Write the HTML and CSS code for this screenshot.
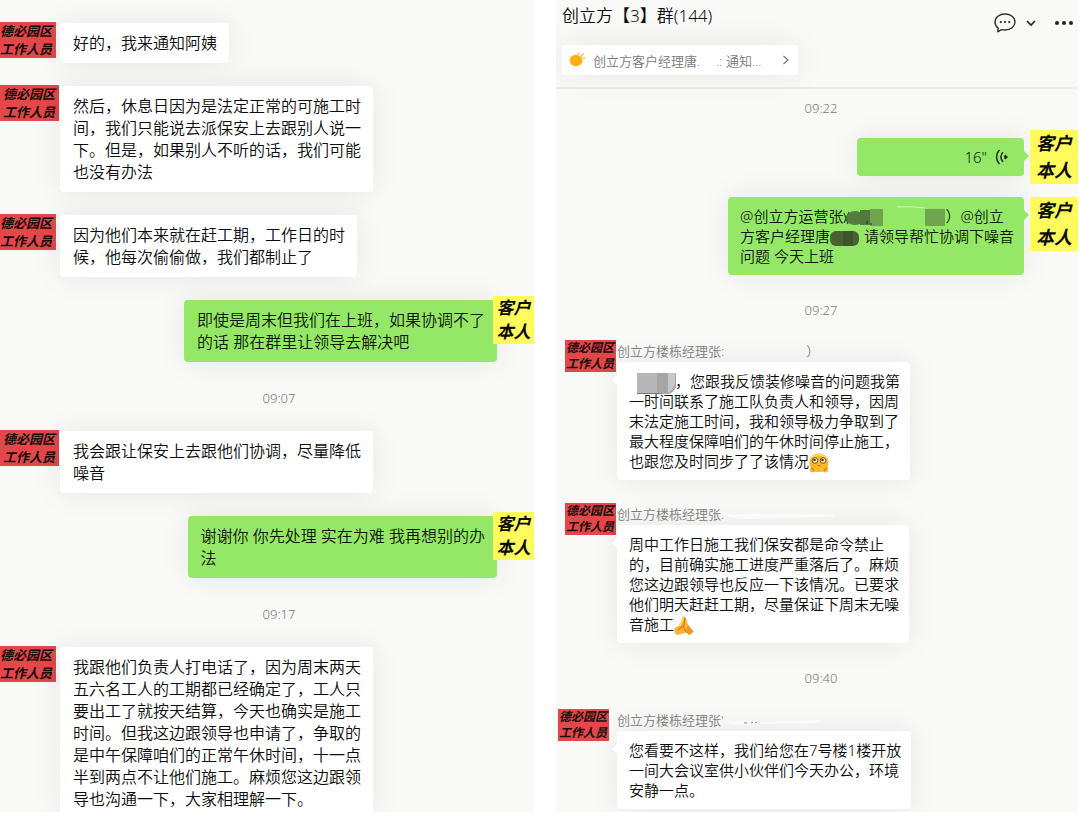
FILE: index.html
```html
<!DOCTYPE html>
<html lang="zh-CN">
<head>
<meta charset="utf-8">
<title>创立方【3】群</title>
<link rel="stylesheet" href="styles.css">
</head>
<body>
<main class="page">
  <section class="panel direct">
    <div class="row"><div class="who"><span class="staff narrow">德必园区<br>工作人员</span></div><p class="bubble">好的，我来通知阿姨</p></div>
    <div class="row"><div class="who"><span class="staff">德必园区<br>工作人员</span></div><p class="bubble">然后，休息日因为是法定正常的可施工时<br>间，我们只能说去派保安上去跟别人说一<br>下。但是，如果别人不听的话，我们可能<br>也没有办法</p></div>
    <div class="row"><div class="who"><span class="staff narrow">德必园区<br>工作人员</span></div><p class="bubble">因为他们本来就在赶工期，工作日的时<br>候，他每次偷偷做，我们都制止了</p></div>
    <div class="row mine"><p class="bubble">即使是周末但我们在上班，如果协调不了<br>的话 那在群里让领导去解决吧</p><span class="client">客户<br>本人</span></div>
    <time class="time">09:07</time>
    <div class="row"><div class="who"><span class="staff">德必园区<br>工作人员</span></div><p class="bubble">我会跟让保安上去跟他们协调，尽量降低<br>噪音</p></div>
    <div class="row mine"><p class="bubble">谢谢你 你先处理 实在为难 我再想别的办<br>法</p><span class="client">客户<br>本人</span></div>
    <time class="time">09:17</time>
    <div class="row"><div class="who"><span class="staff narrow">德必园区<br>工作人员</span></div><p class="bubble cut">我跟他们负责人打电话了，因为周末两天<br>五六名工人的工期都已经确定了，工人只<br>要出工了就按天结算，今天也确实是施工<br>时间。但我这边跟领导也申请了，争取的<br>是中午保障咱们的正常午休时间，十一点<br>半到两点不让他们施工。麻烦您这边跟领<br>导也沟通一下，大家相理解一下。</p></div>
  </section>

  <section class="panel group">
    <header class="head">
      <div class="head-main">
        <h1 class="title">创立方【3】群(144)</h1>
        <button class="notice" type="button">
          <svg class="notice-icon" width="18" height="16" viewBox="0 0 18 16" aria-hidden="true">
            <ellipse cx="8" cy="8.5" rx="6.4" ry="5.8" fill="#fcb013"/>
            <path d="M10.5 2.6 11 .8M13.4 4 15.2 1.8M15 6.4 16.8 5.8" stroke="#fcb847" stroke-width="1.3" stroke-linecap="round"/>
          </svg>
          <span class="notice-name">创立方客户经理唐.</span><span class="notice-text">.: 通知...</span>
          <svg class="notice-arrow" width="8" height="12" viewBox="0 0 8 12" aria-hidden="true"><path d="M1.5 2 6 6 1.5 10" fill="none" stroke="#777" stroke-width="1.2"/></svg>
        </button>
      </div>
      <div class="tools">
        <button class="tool" type="button" aria-label="聊天">
          <svg width="22" height="20" viewBox="0 0 22 20"><path d="M11 1C5.400 1 1 4.500 1 9c0 2.700 1.200 4.700 3.300 6.200L3.700 18.800 7.500 16.600c1.100.3 2.300.4 3.500.4 5.600 0 10-3.500 10-8S16.600 1 11 1Z" fill="none" stroke="#333" stroke-width="1.400" stroke-linejoin="round"/><g fill="#222"><circle cx="6.800" cy="9" r="1.100"/><circle cx="11" cy="9" r="1.100"/><circle cx="15.200" cy="9" r="1.100"/></g></svg>
        </button>
        <button class="tool" type="button" aria-label="展开">
          <svg width="10" height="8" viewBox="0 0 10 8"><path d="M1 2 5 6 9 2" fill="none" stroke="#222" stroke-width="1.600"/></svg>
        </button>
        <button class="tool more" type="button" aria-label="更多">
          <svg width="20" height="6" viewBox="0 0 20 6" fill="#222"><circle cx="3" cy="3" r="2"/><circle cx="10" cy="3" r="2"/><circle cx="17" cy="3" r="2"/></svg>
        </button>
      </div>
    </header>

    <div class="feed">
      <time class="time first">09:22</time>
      <div class="row mine voice-row">
        <p class="bubble voice"><span>16"</span>
          <svg width="14" height="16" viewBox="0 0 14 16" aria-hidden="true"><g fill="none" stroke="#1d2a15" stroke-width="1.500"><path d="M4.400 1C.6 5 .6 11 4.400 15"/><path d="M8 3.200C5.200 6 5.200 10 8 12.800"/></g><path d="M10.300 5.400C8.600 7 8.600 9 10.300 10.600L13 8Z" fill="#1d2a15"/></svg>
        </p><span class="client">客户<br>本人</span>
      </div>
      <div class="row mine">
        <p class="bubble">@创立方运营张<svg class="mask" width="102" height="20" viewBox="0 0 102 20" aria-hidden="true"><path d="M1 5 5 16M6 4 1 15" stroke="#2c421e" stroke-width="1.200"/><ellipse cx="12" cy="10" rx="9" ry="7" fill="#567c3d"/><path d="M17 2h10v15H17z" fill="#527b3b"/><path d="M27 1h13v17H27z" fill="#6fa34e"/><path d="M24 13v3M27 16h2" stroke="#263a1c" stroke-width="1.200"/><path d="M54-1q14-1 28 1" fill="none" stroke="#d3f5be" stroke-width="1"/><path d="M82 1h20v17H82z" fill="#6fa54e"/></svg>）@创立<br>方客户经理唐<svg class="mask" width="30" height="18" viewBox="0 0 30 18" aria-hidden="true"><rect x="0" y="2" width="29" height="15" rx="6" fill="#48632f"/><path d="M13 2h10v15H13z" fill="#3c552b"/></svg> 请领导帮忙协调下噪音<br>问题 今天上班</p><span class="client">客户<br>本人</span>
      </div>
      <time class="time">09:27</time>
      <div class="row">
        <div class="who"><span class="staff">德必园区<br>工作人员</span></div>
        <div class="body"><div class="name"><span>创立方楼栋经理张:</span><span class="name-end">）</span></div>
          <p class="bubble"><svg class="mask lead" width="46" height="24" viewBox="0 0 46 24" aria-hidden="true"><path d="M8 2h22v21H8z" fill="#b7b7b7"/><path d="M28 2h19v14q-2 5-7 7H28z" fill="#a6a6a6"/><path d="M39 2h7v10q-1 6-7 10z" fill="#c9c9c9"/><path d="M8 22.500h24" stroke="#777"/></svg>，您跟我反馈装修噪音的问题我第<br>一时间联系了施工队负责人和领导，因周<br>末法定施工时间，我和领导极力争取到了<br>最大程度保障咱们的午休时间停止施工，<br>也跟您及时同步了了该情况<svg class="emoji" width="20" height="20" viewBox="0 0 20 20" role="img" aria-label="笑脸"><path d="M10 .5c5.500 0 9.500 4 9.500 9.200 0 2-.5 3.500-1 4.500.8 1.500.8 3.500-.2 4.800-1.300.6-3.500.5-4.500-.6-2 .7-5.600.7-7.600 0-1 1.100-3.200 1.200-4.500.6-1-1.300-1-3.300-.2-4.800-.5-1-1-2.500-1-4.500C.5 4.500 4.500.5 10 .5Z" fill="#fbb829"/><path d="M3 4.500Q10-1 17 4.500" fill="none" stroke="#ffd968" stroke-width="1.500"/><g fill="#fff3c8" stroke="#75501c" stroke-width="1"><circle cx="6" cy="7.500" r="2.800"/><circle cx="14" cy="7.500" r="2.800"/></g><g fill="#543911"><circle cx="5.500" cy="7" r="1.300"/><circle cx="13.500" cy="7" r="1.300"/></g><path d="M8.500 12.500h3M2 15q2 0 3 3M18 15q-2 0-3 3" fill="none" stroke="#d06d14"/></svg></p>
        </div>
      </div>
      <div class="row next">
        <div class="who"><span class="staff">德必园区<br>工作人员</span></div>
        <div class="body"><div class="name"><span>创立方楼栋经理张.</span><svg width="112" height="12" viewBox="0 0 112 12" aria-hidden="true"><path d="M0 7q10 1 20 0l90 .5v2L20 12Q8 12 0 7Z" fill="#fff"/></svg></div>
          <p class="bubble">周中工作日施工我们保安都是命令禁止<br>的，目前确实施工进度严重落后了。麻烦<br>您这边跟领导也反应一下该情况。已要求<br>他们明天赶赶工期，尽量保证下周末无噪<br>音施工<svg class="emoji" width="20" height="20" viewBox="0 0 20 20" role="img" aria-label="合十"><path d="M.5 12.500 5 9.500 9 .8q1.800-.8 2.800 1L14 9l5.500 6.500-4 3.500-3.800-2.500-4 1.500-4.500 1L.5 17Z" fill="#f9b233"/><path d="M11 2 9.500 11 12 16M4 14l5-4" fill="none" stroke="#d97e1a" stroke-width="1.200"/><path d="M14 9l5.500 6.500-4 3.500-3.500-3Z" fill="#ef9322"/><path d="M5.500 10 9.200 2" stroke="#ffdc83" stroke-width="1.200"/></svg></p>
        </div>
      </div>
      <time class="time last">09:40</time>
      <div class="row">
        <div class="who"><span class="staff shifted">德必园区<br>工作人员</span></div>
        <div class="body"><div class="name"><span>创立方楼栋经理张'</span><svg width="100" height="12" viewBox="0 0 100 12" aria-hidden="true"><path d="M0 9q20-3 40 0l56-2v3L10 12Z" fill="#fff"/><path d="M20 10h3M27 10l2-1M31 10l2-1" stroke="#888"/></svg></div>
          <p class="bubble">您看要不这样，我们给您在7号楼1楼开放<br>一间大会议室供小伙伴们今天办公，环境<br>安静一点。</p>
        </div>
      </div>
    </div>
  </section>
</main>
</body>
</html>
```

FILE: styles.css
```css
* { box-sizing: border-box; }

body {
  margin: 0;
  background: #fff;
  color: #0c0c0c;
  font-family: "Noto Sans", "Noto Sans CJK SC", sans-serif;
  font-weight: 350;
}

p, h1 { margin: 0; }

button {
  border: 0;
  padding: 0;
  background: none;
  font: inherit;
  color: inherit;
}

svg { flex: none; overflow: visible; }

.page {
  display: grid;
  grid-template-columns: minmax(0, 534fr) minmax(0, 522fr);
  gap: 22px;
  padding-right: 2px;
}

.panel {
  display: flex;
  flex-direction: column;
  background: #f9f9f8;
  overflow: hidden;
}

.row { display: flex; align-items: flex-start; }
.mine { justify-content: flex-end; }
.who { flex: none; }

.bubble {
  position: relative;
  background: #fff;
  border-radius: 4px;
  white-space: nowrap;
  box-shadow: 0 0 30px rgba(0, 0, 0, 0.08);
}

.mine .bubble { background: #95e867; color: #0c1606; }

.staff, .client {
  display: block;
  position: relative;
  font-weight: 700;
  font-style: italic;
  color: #160c0a;
  white-space: nowrap;
}

.staff { background: #e3474a; text-align: right; }
.client { flex: none; background: #fffb5c; text-align: center; color: #0c0c04; }

.time {
  display: block;
  font-size: 13px;
  line-height: 18px;
  text-align: center;
  color: #777;
}

/* direct chat */
.direct { gap: 23px; padding-top: 23px; }
.direct .who { width: 60px; }
.direct .bubble { padding: 9px 12px 9px 13px; font-size: 16px; line-height: 22px; }
.direct .cut { padding-bottom: 2px; border-radius: 4px 4px 0 0; }
.direct .staff { width: 59px; margin-top: -1px; padding-right: 4px; font-size: 13px; line-height: 18px; }
.direct .narrow { width: 56px; }
.direct .client { width: 41px; margin: -4px 0 0 -4px; font-size: 17px; line-height: 24px; }
.direct .time { padding: 4px 0 1px 24px; }

/* group chat */
.head {
  display: flex;
  justify-content: space-between;
  padding: 4px 4px 12px 6px;
  border-bottom: 2px solid #ebebeb;
}

.title { font-size: 17px; line-height: 24px; font-weight: 350; }

.notice {
  display: flex;
  align-items: center;
  width: 236px;
  height: 30px;
  margin-top: 17px;
  padding: 0 8px 0 6px;
  border-radius: 3px;
  background: #fff;
  box-shadow: 0 0 30px rgba(0, 0, 0, 0.08);
  color: #777;
  font-size: 13px;
  white-space: nowrap;
}

.notice-name { margin-left: 7px; }
.notice-text { margin-left: 16px; }
.notice-arrow { margin-left: auto; }

.tools { display: flex; align-items: center; gap: 10px; height: 38px; }
.tool { display: flex; }
.more { margin-left: 8px; }

.feed { padding: 10px 0 3px; }
.group .time { margin: 26px 0 21px; padding-left: 8px; }
.group .first { margin: 0 0 13px; }
.group .last { margin-bottom: 22px; }
.group .row { padding-left: 9px; }
.group .next { margin-top: 23px; }
.group .who { width: 52px; }
.group .staff { width: 51px; padding-right: 2px; font-size: 12px; line-height: 16px; }
.group .shifted { left: -7px; }
.group .bubble { padding: 9px 10px 9px 12px; font-size: 15px; line-height: 20px; }
.group .client { width: 48px; margin-left: 6px; font-size: 18px; line-height: 27px; }

.group .voice-row { align-items: center; margin-bottom: 13px; }
.group .voice {
  display: flex;
  align-items: center;
  justify-content: flex-end;
  gap: 8px;
  width: 167px;
  padding: 9px 15px;
}

.group .bubble::after {
  content: "";
  position: absolute;
  top: 13px;
  left: -5px;
  border: 5px solid transparent;
  border-left: 0;
  border-right-color: #fff;
}

.group .mine .bubble::after {
  left: auto;
  right: -5px;
  border-left: 5px solid #95e867;
  border-right: 0;
}

.name {
  display: flex;
  align-items: center;
  height: 20px;
  margin-bottom: 2px;
  font-size: 13px;
  color: #808080;
}

.name-end { margin-left: 82px; }
.body .bubble { min-width: 291px; }

.mask { vertical-align: middle; margin: -4px 0; }
.lead { margin: -6px 0; }
.emoji { vertical-align: middle; margin: -4px 0; }
```
